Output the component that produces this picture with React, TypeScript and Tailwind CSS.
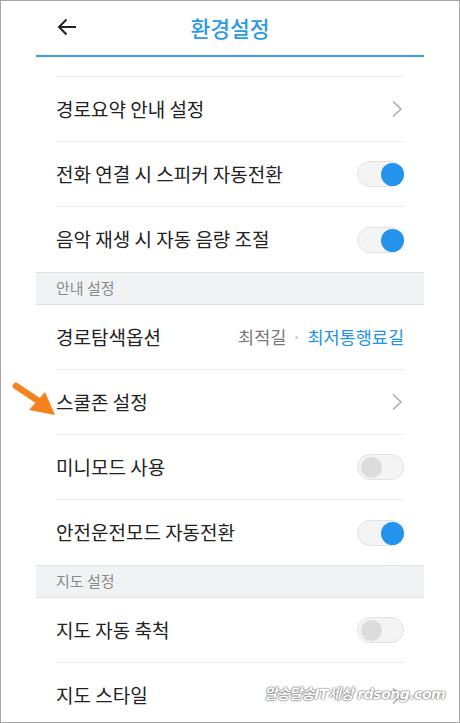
import React from "react";

const font = "font-['Noto_Sans_CJK_KR','Noto_Sans',sans-serif]";

function Toggle({ on }: { on: boolean }) {
  return (
    <div className="relative h-[26px] w-[47px] rounded-full border border-[#e2e2e2] bg-[#f4f4f4]">
      <div
        className={
          on
            ? "absolute right-[-1px] top-[1px] h-[23px] w-[23px] rounded-full bg-[#2393ee]"
            : "absolute left-[3px] top-[2px] h-[21px] w-[21px] rounded-full bg-[#dcdcdc]"
        }
      />
    </div>
  );
}

function Chevron() {
  return (
    <svg width="12" height="18" viewBox="0 0 12 18" className="mr-[1px]">
      <path d="M2 1.5 L10 9 L2 16.5" fill="none" stroke="#a8a8a8" strokeWidth="1.4" />
    </svg>
  );
}

function Row({
  label,
  right,
  divider = true,
}: {
  label: string;
  right?: React.ReactNode;
  divider?: boolean;
}) {
  return (
    <div className={"mx-[20px] flex h-[65px] items-center justify-between " + (divider ? "border-b border-[#ececec]" : "")}>
      <span className="text-[19px] text-[#222]">{label}</span>
      {right}
    </div>
  );
}

function Section({ title }: { title: string }) {
  return (
    <div className="flex h-[33px] items-center border-y border-[#e0e3e6] bg-[#f0f2f4] px-[20px]">
      <span className="text-[15px] text-[#8a8a8a]">{title}</span>
    </div>
  );
}

export default function App() {
  return (
    <div className={"relative h-[723px] w-[460px] overflow-hidden border border-[#a6a6a6] bg-white " + font}>
      <div className="mx-[35px]">
        <div className="relative flex h-[54px] items-center justify-center">
          <svg width="20" height="18" viewBox="0 0 20 18" className="absolute left-[21px] top-[17px]">
            <path d="M19 9 H2 M9.5 1.5 L2 9 L9.5 16.5" fill="none" stroke="#222" strokeWidth="2" />
          </svg>
          <span className="text-[21.5px] font-medium text-[#2b9be3]">환경설정</span>
        </div>
        <div className="h-[2px] bg-[#3aa2e4]" />
        <div className="mx-[20px] h-[20px] border-b border-[#ececec]" />
        <Row label="경로요약 안내 설정" right={<Chevron />} />
        <Row label="전화 연결 시 스피커 자동전환" right={<Toggle on />} />
        <Row label="음악 재생 시 자동 음량 조절" right={<Toggle on />} divider={false} />
        <Section title="안내 설정" />
        <Row
          label="경로탐색옵션"
          right={
            <div className="flex items-center text-[17.5px]">
              <span className="text-[#7a7a7a]">최적길</span>
              <span className="mx-[9px] h-[3px] w-[3px] rounded-full bg-[#cfcfcf]" />
              <span className="text-[#2393e6]">최저통행료길</span>
            </div>
          }
        />
        <Row label="스쿨존 설정" right={<Chevron />} />
        <Row label="미니모드 사용" right={<Toggle on={false} />} />
        <Row label="안전운전모드 자동전환" right={<Toggle on />} divider={false} />
        <Section title="지도 설정" />
        <Row label="지도 자동 축척" right={<Toggle on={false} />} />
        <Row label="지도 스타일" right={<Chevron />} divider={false} />
      </div>

      <svg width="46" height="36" viewBox="0 0 46 36" className="absolute left-[11px] top-[381px]">
        <path d="M4 4 L28 20" stroke="#f5821f" strokeWidth="6.5" strokeLinecap="round" />
        <path d="M43 33 L17 28 L33 10 Z" fill="#f5821f" />
      </svg>

      <div className="absolute left-[263px] top-[683px] whitespace-nowrap text-[14.5px] font-bold italic text-white [text-shadow:_0_0_2px_#555,_0_0_1px_#555] font-['DejaVu_Sans','Noto_Sans_CJK_KR',sans-serif] tracking-[-0.8px]">
        알송달송IT세상 rdsong.com
      </div>
    </div>
  );
}
